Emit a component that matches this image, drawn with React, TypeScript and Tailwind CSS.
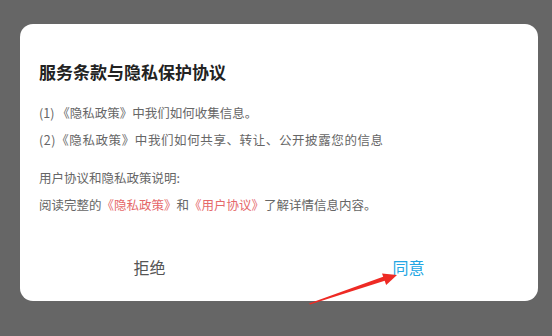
import React from "react";

export default function App() {
  return (
    <div
      className="relative w-[552px] h-[336px] bg-[#666666] overflow-hidden"
      style={{ fontFamily: '"Noto Sans CJK SC", "Noto Sans", sans-serif' }}
    >
      <div className="absolute left-[20px] top-[24px] w-[518px] h-[277px] bg-white rounded-[13px] flex flex-col">
        <div className="pt-[36px] px-[19px]">
          <div className="text-[17px] leading-[24px] font-bold text-[#222222]">
            服务条款与隐私保护协议
          </div>
          <div className="mt-[14.5px] text-[12.5px] leading-[27px] text-[#666666]">
            <div>(1) 《隐私政策》中我们如何收集信息。</div>
            <div className="tracking-[0.6px]">(2)《隐私政策》中我们如何共享、转让、公开披露您的信息</div>
          </div>
          <div className="mt-[11px] text-[12.5px] leading-[27px] text-[#666666]">
            <div>用户协议和隐私政策说明:</div>
            <div>
              阅读完整的<span className="text-[#e5686a]">《隐私政策》</span>和
              <span className="text-[#e5686a]">《用户协议》</span>了解详情信息内容。
            </div>
          </div>
        </div>
        <div className="mt-[25.5px] flex h-[48px]">
          <div className="flex-1 flex items-center justify-center text-[16px] text-[#555555]">
            拒绝
          </div>
          <div className="flex-1 flex items-center justify-center text-[16px] text-[#22a6e3]">
            同意
          </div>
        </div>
      </div>
      <svg
        className="absolute left-0 top-0"
        width="552"
        height="336"
        viewBox="0 0 552 336"
      >
        <polygon
          points="309,303.5 384.5,276.3 385.5,280.5 310,304.5"
          fill="#ee2a24"
        />
        <polygon points="397,275 382,273.5 386.2,285" fill="#ee2a24" />
      </svg>
    </div>
  );
}
